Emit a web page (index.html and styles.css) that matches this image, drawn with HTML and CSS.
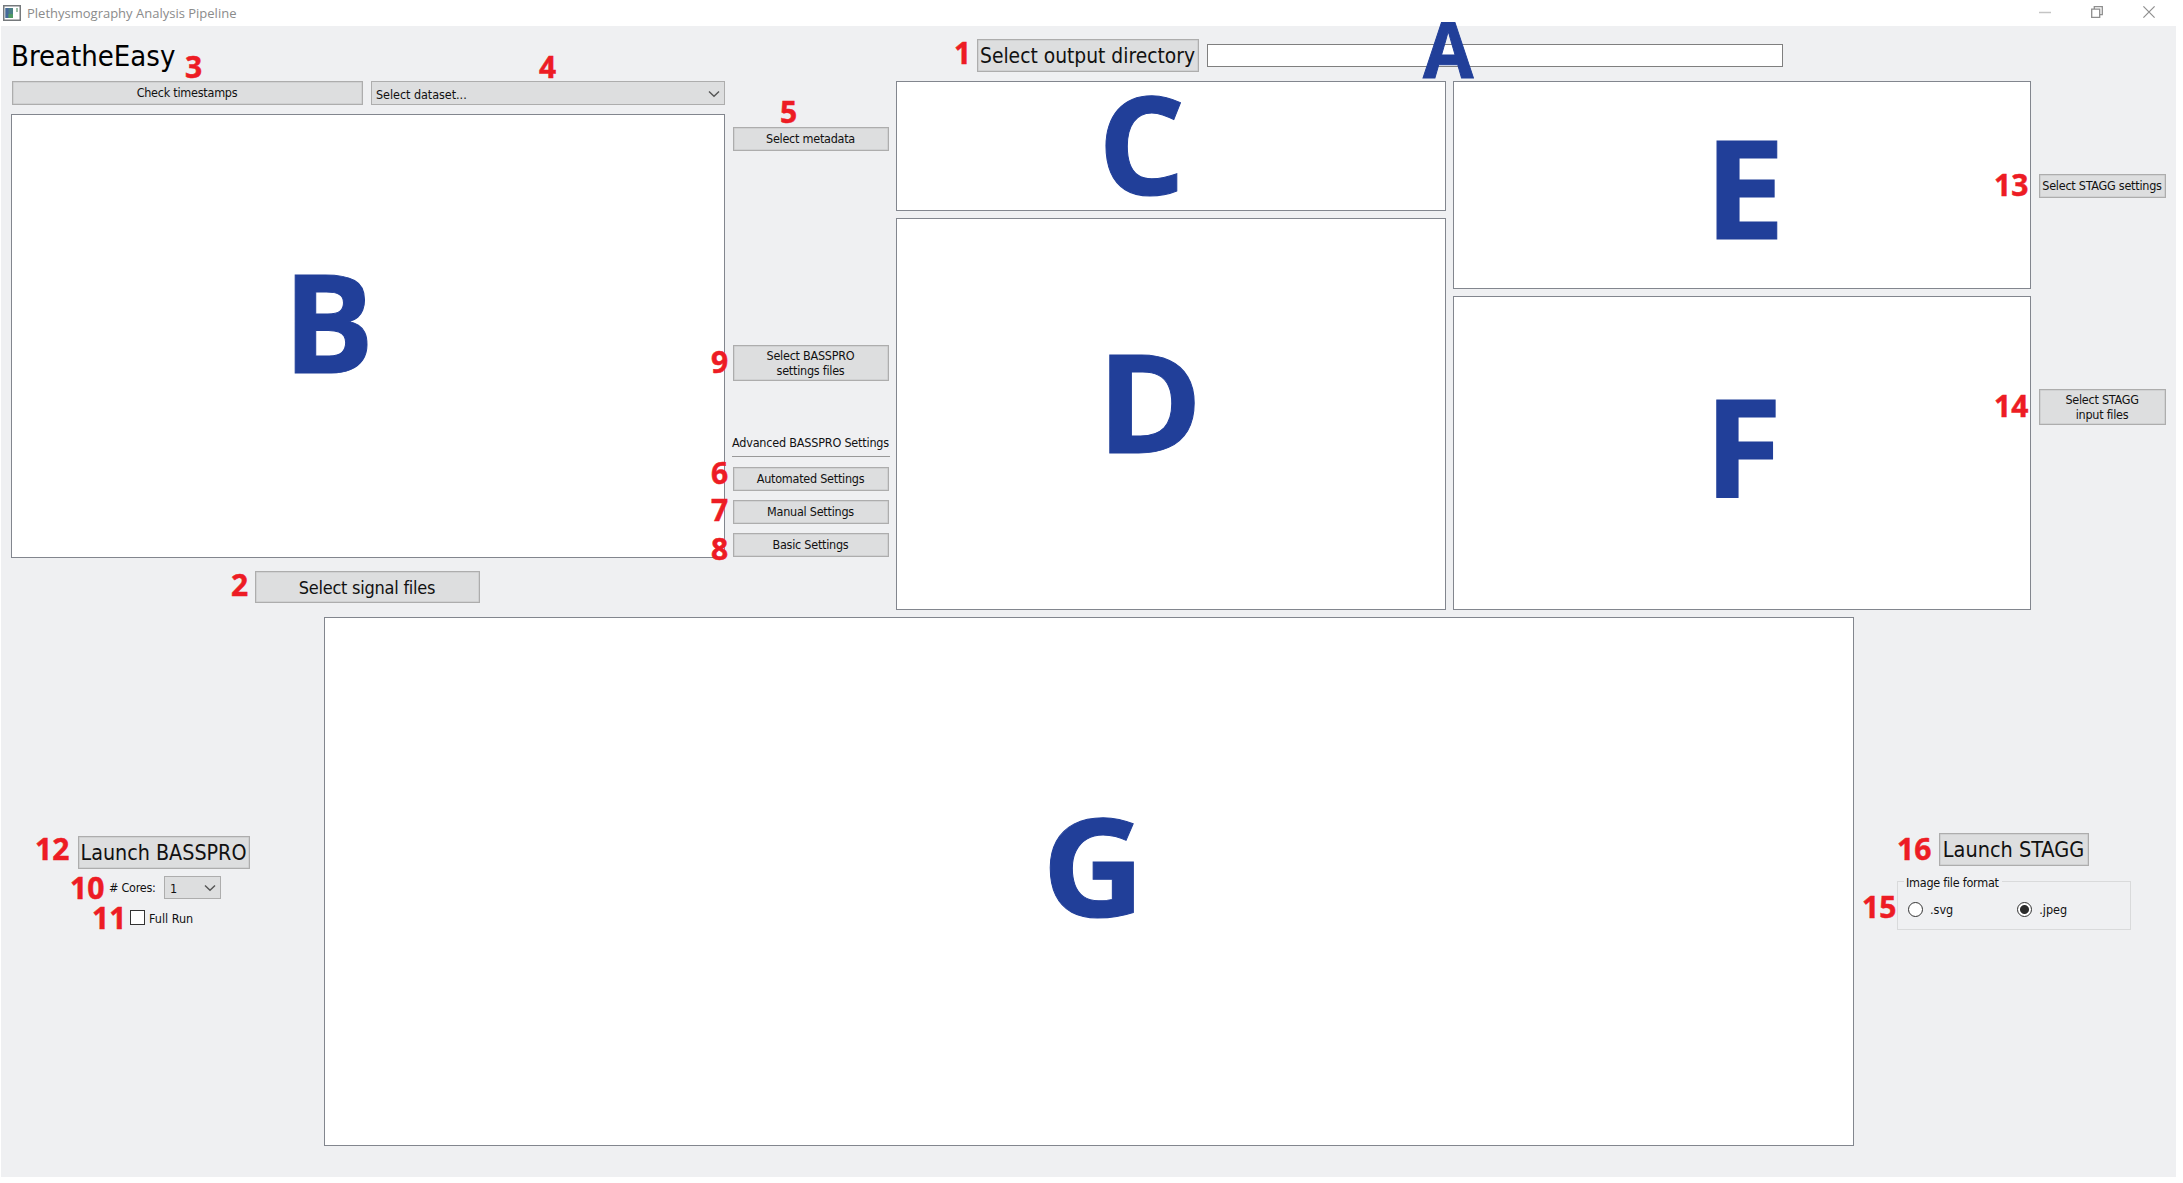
FILE: index.html
```html
<!DOCTYPE html>
<html lang="en">
<head>
<meta charset="utf-8">
<title>Plethysmography Analysis Pipeline</title>
<link rel="stylesheet" href="styles.css">
</head>
<body>
<div class="window">
  <header class="titlebar">
    <svg class="app-icon" width="18" height="16" viewBox="0 0 18 16">
      <rect x="0.75" y="0.75" width="16.5" height="14.5" fill="#fff" stroke="#75797c" stroke-width="1.5"/>
      <rect x="2.500" y="3" width="7.500" height="10" fill="#4a7f86"/>
      <rect x="2.500" y="3" width="3" height="10" fill="#46699a"/>
      <rect x="5.5" y="9" width="4.500" height="4" fill="#4f9a63"/>
      <rect x="13" y="3" width="2" height="4" fill="#9dbfa8"/>
    </svg>
    <span class="window-title">Plethysmography Analysis Pipeline</span>
    <div class="window-controls">
      <svg width="12" height="12" viewBox="0 0 12 12"><path d="M0 6.500H12" stroke="#c4c4c4" stroke-width="1.500" fill="none"/></svg>
      <svg width="12" height="12" viewBox="0 0 12 12"><path d="M.7 3.200H8.700V11.300H.7ZM3.300 3.200V.7H11.300V8.700H8.700" stroke="#8e8e8e" stroke-width="1.300" fill="none"/></svg>
      <svg width="12" height="12" viewBox="0 0 12 12"><path d="M.4.4 11.600 11.600M11.600.4.4 11.600" stroke="#8e8e8e" stroke-width="1.200" fill="none"/></svg>
    </div>
  </header>

  <main class="workspace">
    <div class="upper">
      <section class="signals">
        <h1 class="brand">BreatheEasy</h1>
        <div class="signal-tools">
          <button class="btn check">Check timestamps</button>
          <div class="select dataset"><span>Select dataset...</span>
            <svg class="chevron" width="12" height="8" viewBox="0 0 12 8"><path d="M1 1.500 6 6.300 11 1.500"/></svg>
          </div>
        </div>
        <div class="panel signal-list"></div>
        <button class="btn big signal-btn">Select signal files</button>
      </section>

      <section class="basspro">
        <button class="btn metadata">Select metadata</button>
        <button class="btn tall">Select BASSPRO<br>settings files</button>
        <h2 class="advanced">Advanced BASSPRO Settings</h2>
        <div class="advanced-list">
          <button class="btn">Automated Settings</button>
          <button class="btn">Manual Settings</button>
          <button class="btn">Basic Settings</button>
        </div>
      </section>

      <section class="files">
        <div class="output">
          <button class="btn big output-btn">Select output directory</button>
          <input class="output-path" type="text">
        </div>
        <div class="panels">
          <div class="panel-col col-basspro">
            <div class="panel panel-c"></div>
            <div class="panel grow"></div>
          </div>
          <div class="panel-col col-stagg">
            <div class="panel panel-e"></div>
            <div class="panel grow"></div>
          </div>
        </div>
      </section>

      <section class="stagg">
        <button class="btn stagg-settings">Select STAGG settings</button>
        <button class="btn tall">Select STAGG<br>input files</button>
      </section>
    </div>

    <div class="lower">
      <section class="run-basspro">
        <button class="btn big launch-basspro">Launch BASSPRO</button>
        <div class="cores"><span>#&nbsp;Cores:</span>
          <div class="select cores-select"><span>1</span>
            <svg class="chevron" width="12" height="8" viewBox="0 0 12 8"><path d="M1 1.500 6 6.300 11 1.500"/></svg>
          </div>
        </div>
        <div class="full-run"><span class="checkbox"></span><span>Full Run</span></div>
      </section>
      <div class="panel log"></div>
      <section class="run-stagg">
        <button class="btn big launch-stagg">Launch STAGG</button>
        <div class="format">
          <span class="format-title">Image file format</span>
          <div class="radio"><i class="dot"></i><span>.svg</span></div>
          <div class="radio"><i class="dot on"></i><span>.jpeg</span></div>
        </div>
      </section>
    </div>
  </main>

  <div class="labels">
    <b class="num n1">1</b><b class="num n2">2</b><b class="num n3">3</b><b class="num n4">4</b>
    <b class="num n5">5</b><b class="num n6">6</b><b class="num n7">7</b><b class="num n8">8</b>
    <b class="num n9">9</b><b class="num n10">10</b><b class="num n11">11</b><b class="num n12">12</b>
    <b class="num n13">13</b><b class="num n14">14</b><b class="num n15">15</b><b class="num n16">16</b>
    <b class="letter la">A</b><b class="letter lb">B</b><b class="letter lc">C</b><b class="letter ld">D</b>
    <b class="letter le">E</b><b class="letter lf">F</b><b class="letter lg">G</b>
  </div>
</div>
</body>
</html>
```

FILE: styles.css
```css
* { box-sizing: border-box; }

body {
  margin: 0;
  background: #fff;
  color: #111;
  font: 12.500px/15px "DejaVu Sans Condensed", "DejaVu Sans", sans-serif;
  letter-spacing: -.25px;
}

.window { position: relative; width: 2183px; height: 1183px; overflow: hidden; }

/* Title bar */
.titlebar { display: flex; align-items: center; height: 26px; padding: 0 28px 0 3px; }
.app-icon { flex: none; margin-top: -1px; }
.window-title { margin: 0 0 0 6px; color: #8b8b8b; font: 13px/18px "Open Sans", sans-serif; letter-spacing: 0; }
.window-controls { display: flex; gap: 40px; margin-left: auto; }
.window-controls svg { display: block; margin-top: -2px; }

/* Shared controls */
.workspace { width: 2175px; height: 1151px; margin-left: 1px; background: #eff0f2; }

.btn {
  display: block;
  height: 24px;
  margin: 0;
  padding: 1px 1px 0 0;
  border: 1px solid #adadad;
  background: #dddedf;
  box-shadow: inset 0 0 0 .5px #c4c4c5;
  color: #111;
  font: inherit;
  letter-spacing: inherit;
  line-height: 14.500px;
  text-align: center;
  white-space: nowrap;
}
.btn.tall { height: 36px; }
.btn.big { font-size: 21.300px; line-height: 24px; letter-spacing: 0; }

.select {
  display: flex;
  align-items: center;
  justify-content: space-between;
  border: 1px solid #adadad;
  background: #dddedf;
  padding: 2px 4px 0;
}
.chevron path { fill: none; stroke: #555; stroke-width: 1.400; }

.panel { border: 1px solid #82868e; background: #fff; }

.upper { display: flex; height: 591px; padding-left: 10px; }

/* Signal files */
.signals { width: 714px; padding-top: 13px; }
.brand { height: 42px; margin: 0; font-size: 29px; font-weight: 400; line-height: 35px; letter-spacing: 0; color: #000; }
.signal-tools { display: flex; justify-content: space-between; padding-left: 1px; }
.check { width: 351px; }
.dataset { width: 354px; height: 24px; letter-spacing: -.05px; }
.signal-list { height: 444px; margin-top: 9px; }
.signal-btn { width: 225px; height: 32px; margin: 13px 0 0 244px; padding-top: 2px; }
.btn.signal-btn { font-size: 18px; letter-spacing: -.25px; }

/* BASSPRO settings */
.basspro { width: 156px; margin-left: 8px; padding-top: 101px; }
.basspro .btn { width: 156px; }
.basspro .tall { margin-top: 194px; }
.advanced {
  width: 158px;
  height: 22px;
  margin: 54px 0 0 -1px;
  border-bottom: 1px solid #999;
  font-size: 12.500px;
  font-weight: 400;
  line-height: 16px;
  letter-spacing: -.2px;
  white-space: nowrap;
}
.advanced-list { display: grid; gap: 9px; margin-top: 10px; }

/* Output folder and selected files */
.files { width: 1135px; margin-left: 7px; padding-top: 13px; }
.output { display: flex; align-items: center; gap: 8px; height: 33px; padding-left: 81px; }
.btn.output-btn { width: 222px; height: 33px; font-size: 20.800px; }
.output-path { width: 576px; height: 23px; margin: 0; border: 1px solid #7f7f7f; background: #fff; outline: 0; }
.panels { display: flex; gap: 7px; height: 529px; margin-top: 9px; }
.panel-col { display: flex; flex-direction: column; gap: 7px; }
.col-basspro { width: 550px; }
.col-stagg { width: 578px; }
.panel-c { height: 130px; }
.panel-e { height: 208px; }
.grow { flex: 1; }

/* STAGG settings */
.stagg { width: 127px; margin-left: 8px; padding-top: 148px; }
.stagg .btn { width: 127px; }
.stagg .tall { margin-top: 191px; }

/* Lower row */
.lower { display: flex; height: 530px; }
.run-basspro { width: 323px; padding: 219px 0 0 77px; }
.launch-basspro { width: 172px; height: 33px; }
.cores { display: flex; align-items: center; justify-content: space-between; width: 112px; margin: 7px 0 0 31px; }
.cores-select { width: 57px; height: 23px; padding: 1px 4px 0 5px; }
.full-run { display: flex; align-items: center; gap: 4px; margin: 10px 0 0 52px; letter-spacing: 0; }
.full-run span + span { padding-top: 2px; }
.checkbox { width: 15px; height: 15px; border: 1.500px solid #333; background: #fff; }
.log { width: 1530px; height: 529px; }

.run-stagg { padding: 216px 0 0 43px; }
.launch-stagg { width: 150px; height: 33px; margin-left: 42px; }
.btn.launch-stagg { font-size: 21.500px; }
.format {
  position: relative;
  display: flex;
  align-items: center;
  gap: 64px;
  width: 234px;
  height: 49px;
  margin-top: 15px;
  padding: 8px 0 0 10px;
  border: 1px solid #d9dadb;
}
.format-title { position: absolute; top: -7px; left: 6px; padding: 0 3px 0 2px; background: #eff0f2; }
.radio { display: flex; align-items: center; gap: 7px; letter-spacing: 0; }
.dot { width: 15px; height: 15px; border: 1px solid #333; border-radius: 50%; background: #fff; }
.dot.on { background: radial-gradient(circle, #2b2b2b 4px, #fff 5px); }

/* Callout numbers and letters */
.num, .letter { position: absolute; font-family: "Open Sans", "Noto Sans", sans-serif; font-weight: 700; line-height: 1; letter-spacing: 0; }
.num { color: #ed1c24; font-size: 30px; -webkit-text-stroke: .5px #ed1c24; }
.letter { color: #213f99; font-size: 137px; transform-origin: 0 0; -webkit-text-stroke: 1px #213f99; }

.n1 { left: 954px; top: 38px; }
.n2 { left: 231px; top: 570px; }
.n3 { left: 185px; top: 52px; }
.n4 { left: 539px; top: 52px; }
.n5 { left: 780px; top: 97px; }
.n6 { left: 711px; top: 458px; }
.n7 { left: 711px; top: 495px; }
.n8 { left: 711px; top: 534px; }
.n9 { left: 711px; top: 347px; }
.n10 { left: 70px; top: 873px; }
.n11 { left: 92px; top: 903px; }
.n12 { left: 35px; top: 834px; }
.n13 { left: 1994px; top: 170px; }
.n14 { left: 1994px; top: 391px; }
.n15 { left: 1862px; top: 892px; }
.n16 { left: 1897px; top: 834px; }

.la { left: 1423px; top: 10px; font-size: 77px; transform: scaleX(.95); }
.lb { left: 283px; top: 252px; transform: scaleX(.99); }
.lc { left: 1098px; top: 74px; }
.ld { left: 1097px; top: 332px; transform: scaleX(1.040); }
.le { left: 1704px; top: 118px; transform: scaleX(1.060); }
.lf { left: 1704px; top: 377px; transform: scaleX(1.040); }
.lg { left: 1042px; top: 796px; transform: scaleX(1.035); }
```
